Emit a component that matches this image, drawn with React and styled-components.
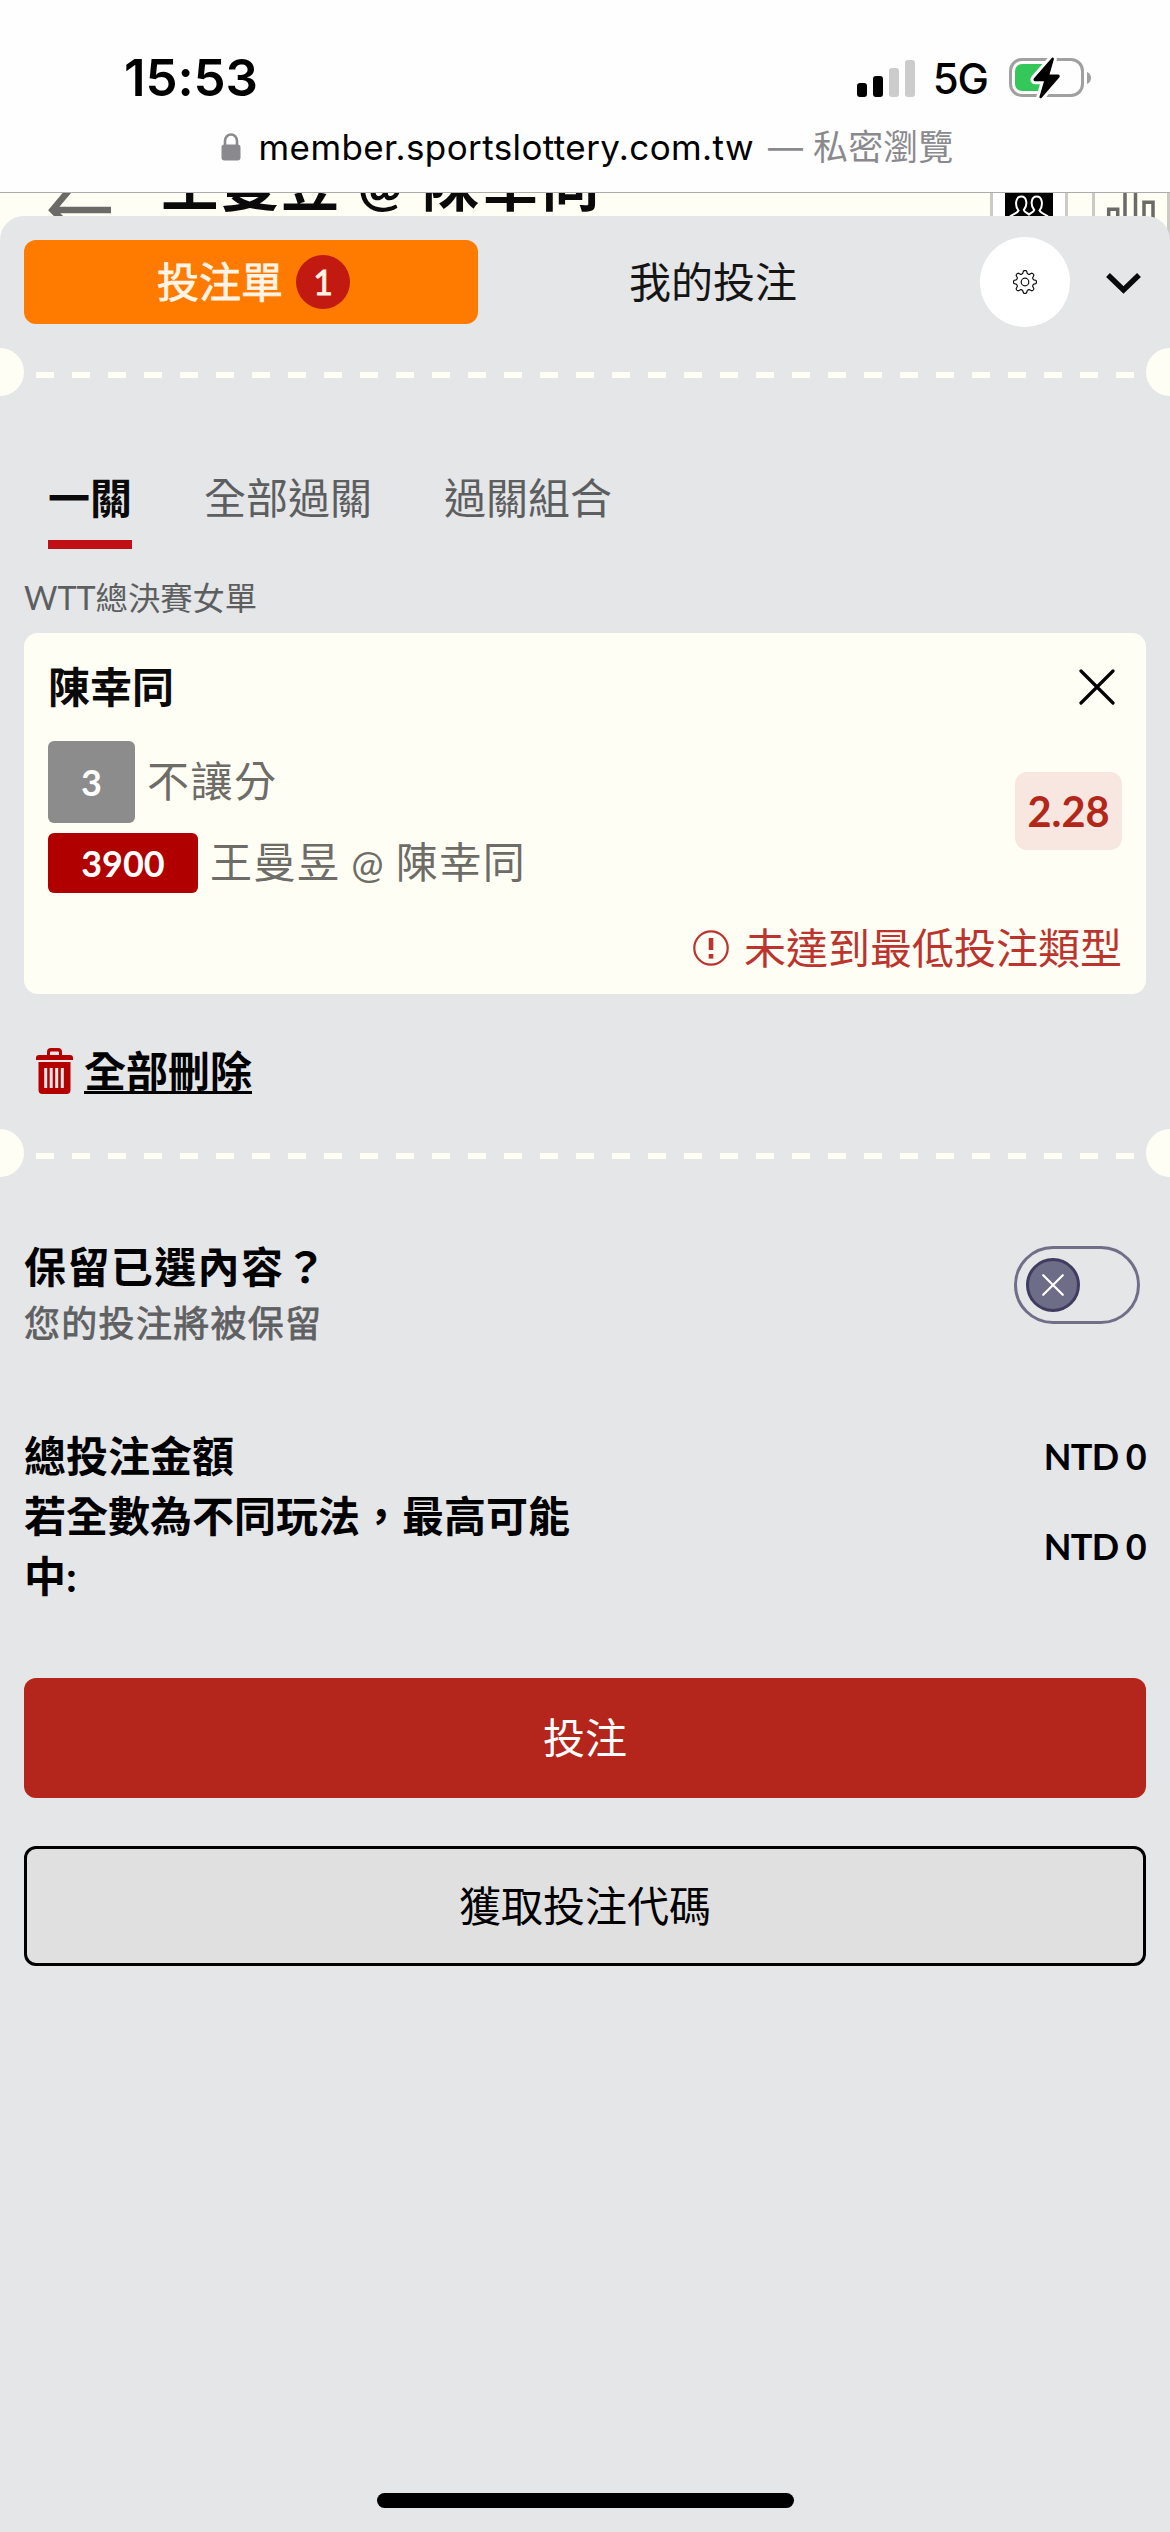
import React from 'react';
import styled, { createGlobalStyle } from 'styled-components';

const SANS = `Lato, "Noto Sans CJK TC", sans-serif`;
const SYSTEM = `Inter, "Noto Sans CJK TC", sans-serif`;
const CREAM = '#fffef5';
const SHEET = '#e4e6e8';

const GlobalStyle = createGlobalStyle`
  *, *::before, *::after { box-sizing: border-box; }
  body { margin: 0; background: ${SHEET}; font-family: ${SANS}; color: #000; }
  button { font: inherit; color: inherit; background: none; border: 0; padding: 0; margin: 0; }
  svg { display: block; flex: none; }
  h1, h2, p { margin: 0; font: inherit; }
`;

const Screen = styled.div`
  width: 1170px;
  height: 2532px;
  display: flex;
  flex-direction: column;
  overflow: hidden;
  background: ${CREAM};
`;

/* Browser chrome */
const Chrome = styled.header`
  flex: none;
  height: 193px;
  background: #fefefe;
  border-bottom: 1px solid #adadad;
  font-family: ${SYSTEM};
  display: flex;
  flex-direction: column;
`;
const StatusBar = styled.div`
  display: flex;
  justify-content: space-between;
  align-items: center;
  height: 60px;
  margin-top: 48px;
  padding: 0 79px 0 124px;
`;
const Clock = styled.span`
  font-size: 51px;
  font-weight: 600;
  letter-spacing: -0.1px;
  line-height: 60px;
`;
const StatusIcons = styled.div`
  display: flex;
  align-items: center;
`;
const Network = styled.span`
  font-size: 42px;
  font-weight: 500;
  line-height: 60px;
  letter-spacing: -1px;
  margin: 2px 21px 0 18px;
`;
const AddressBar = styled.div`
  display: flex;
  align-items: center;
  justify-content: center;
  height: 48px;
  margin-top: 15px;
  margin-bottom: auto;
  padding-left: 4px;
  font-size: 35px;
  line-height: 48px;
  white-space: pre;
`;
const Host = styled.span`
  margin-left: 18px;
  letter-spacing: 0.4px;
`;
const Mode = styled.span`
  color: #8a8a8e;
  margin-left: 14px;
  letter-spacing: 0.1px;
`;

/* Match page behind the sheet */
const PageHeader = styled.div`
  flex: none;
  height: 47px;
  overflow: hidden;
  display: flex;
  align-items: flex-start;
  padding-left: 48px;
`;
const PageTitle = styled.h1`
  flex: 1;
  margin: -29px 0 0 49px;
  font-size: 57.5px;
  font-weight: 700;
  line-height: 40px;
  letter-spacing: 2.6px;
  color: #0a0a0a;
  white-space: nowrap;
`;
const At = styled.span`
  font-size: 0.92em;
  line-height: 0;
`;
const HeaderCell = styled.div`
  width: 78px;
  height: 47px;
  border: solid #cbcac5;
  border-width: 0 3px;
  background: ${(p) => (p.$plain ? 'transparent' : '#fff')};
  margin-left: ${(p) => (p.$plain ? '24px' : '0')};
  display: flex;
  justify-content: center;
`;

/* Bet slip sheet */
const Sheet = styled.main`
  flex: 1;
  min-height: 0;
  margin-top: -24px;
  background: ${SHEET};
  border-radius: 24px 24px 0 0;
  display: flex;
  flex-direction: column;
`;
const SlipBar = styled.div`
  flex: none;
  height: 132px;
  display: flex;
  align-items: center;
  padding-left: 24px;
`;
const SlipTab = styled.button`
  display: flex;
  align-items: center;
  justify-content: center;
  gap: 13px;
  width: ${(p) => (p.$active ? '454px' : '470px')};
  height: 84px;
  padding-left: ${(p) => (p.$active ? '5px' : '0')};
  border-radius: 12px;
  font-size: 42px;
  line-height: 60px;
  background: ${(p) => (p.$active ? '#ff7b00' : 'transparent')};
  color: ${(p) => (p.$active ? '#fff4e6' : '#151515')};
  -webkit-text-stroke: ${(p) => (p.$active ? '0.8px' : '0')};
`;
const Count = styled.span`
  width: 54px;
  height: 54px;
  border-radius: 50%;
  background: #c21a11;
  font-size: 34px;
  line-height: 54px;
  text-align: center;
`;
const SettingsButton = styled.button`
  width: 90px;
  height: 90px;
  border-radius: 50%;
  background: #fff;
  margin-left: 32px;
  display: flex;
  align-items: center;
  justify-content: center;
`;
const CollapseButton = styled.button`
  margin: 4px 0 0 34px;
`;

const Perforation = styled.div`
  flex: none;
  height: 48px;
  display: flex;
  justify-content: space-between;
`;
const Notch = styled.i`
  width: 24px;
  height: 48px;
  background: ${CREAM};
  border-radius: ${(p) => (p.$right ? '24px 0 0 24px' : '0 24px 24px 0')};
`;
const Dashes = styled.i`
  flex: 1;
  height: 6px;
  margin: 24px 12px 0;
  background: repeating-linear-gradient(90deg, ${CREAM} 0 18px, transparent 18px 36px);
`;

const Modes = styled.nav`
  display: flex;
  gap: 72px;
  padding: 72px 48px 0;
`;
const ModeTab = styled.button`
  font-size: 42px;
  line-height: 60px;
  padding-bottom: 12px;
  border-bottom: 9px solid ${(p) => (p.$active ? '#c01015' : 'transparent')};
  font-weight: ${(p) => (p.$active ? 700 : 400)};
  color: ${(p) => (p.$active ? '#0a0a0a' : '#5d5e60')};
`;

const League = styled.p`
  margin: 29px 24px 15px;
  font-size: 32.3px;
  line-height: 40px;
  color: #5d5e60;
`;

const Card = styled.section`
  flex: none;
  height: 361px;
  margin: 0 24px;
  padding: 0 24px;
  border-radius: 14px;
  background: ${CREAM};
`;
const CardHead = styled.div`
  height: 108px;
  display: flex;
  align-items: center;
  justify-content: space-between;
  padding-right: 7px;
`;
const Player = styled.h2`
  font-size: 42px;
  font-weight: 700;
  line-height: 60px;
  color: #0a0a0a;
`;
const CardBody = styled.div`
  display: flex;
  align-items: center;
  justify-content: space-between;
`;
const Markets = styled.div`
  display: flex;
  flex-direction: column;
  gap: 10px;
`;
const Market = styled.div`
  display: flex;
  align-items: center;
  gap: 12px;
`;
const MarketName = styled.span`
  padding-bottom: 2px;
  font-size: 42px;
  line-height: 58px;
  letter-spacing: 1.5px;
  word-spacing: -1.5px;
  color: #6d6c67;
`;
const Code = styled.span`
  display: flex;
  align-items: center;
  justify-content: center;
  width: ${(p) => (p.$event ? '150px' : '87px')};
  height: ${(p) => (p.$event ? '60px' : '82px')};
  border-radius: 6px;
  background: ${(p) => (p.$event ? '#b00000' : '#8c8c8c')};
  color: #fff;
  font-size: 36px;
  font-weight: 700;
  line-height: 60px;
`;
const Odds = styled.span`
  width: 107px;
  height: 78px;
  margin-bottom: 12px;
  border-radius: 12px;
  background: #f8e6e0;
  color: #b3271b;
  font-size: 41.5px;
  font-weight: 700;
  line-height: 78px;
  text-align: center;
`;
const Warning = styled.div`
  display: flex;
  align-items: center;
  justify-content: flex-end;
  gap: 15px;
  margin-top: 25px;
  font-size: 42px;
  line-height: 60px;
  color: #bb352e;
`;

const DeleteAll = styled.button`
  display: flex;
  align-items: center;
  gap: 11px;
  height: 135px;
  padding: 19px 0 0 36px;
`;
const DeleteLabel = styled.span`
  font-size: 42px;
  font-weight: 700;
  line-height: 60px;
  text-decoration: underline;
  text-decoration-thickness: 3px;
  text-underline-offset: 4px;
  text-decoration-skip-ink: none;
`;

const KeepRow = styled.div`
  display: flex;
  justify-content: space-between;
  padding: 60px 30px 0 24px;
`;
const KeepTitle = styled.p`
  font-size: 42px;
  font-weight: 700;
  line-height: 60px;
  letter-spacing: 1.4px;
`;
const KeepNote = styled.p`
  font-size: 36px;
  line-height: 52px;
  letter-spacing: 1.3px;
  color: #5f6062;
  -webkit-text-stroke: 0.8px;
`;
const Toggle = styled.button`
  width: 126px;
  height: 78px;
  margin-top: 9px;
  padding: 9px;
  border: 3px solid #6f6f88;
  border-radius: 39px;
`;
const Knob = styled.span`
  width: 54px;
  height: 54px;
  border-radius: 50%;
  border: 3px solid #403c60;
  background: #6e6d88;
  display: flex;
  align-items: center;
  justify-content: center;
`;

const Totals = styled.div`
  margin-top: 77px;
  padding: 0 24px;
`;
const TotalRow = styled.div`
  display: flex;
  align-items: center;
  justify-content: space-between;
  font-weight: 700;
`;
const TotalLabel = styled.span`
  width: 562px;
  font-size: 42px;
  line-height: 60px;
`;
const Amount = styled.span`
  padding-bottom: 1px;
  font-size: 36px;
  line-height: 58px;
  letter-spacing: -0.7px;
  word-spacing: -0.6px;
`;

const Actions = styled.div`
  display: flex;
  flex-direction: column;
  gap: 48px;
  padding: 72px 24px 0;
`;
const Action = styled.button`
  height: 120px;
  border-radius: 12px;
  font-size: 42px;
  line-height: 60px;
  background: ${(p) => (p.$primary ? '#b4261b' : '#e0e0e0')};
  color: ${(p) => (p.$primary ? '#fff' : '#000')};
  border: ${(p) => (p.$primary ? '0' : '3px solid #000')};
`;

const HomeIndicator = styled.div`
  width: 417px;
  height: 15px;
  border-radius: 8px;
  background: #000;
  margin: auto auto 24px;
`;

const Signal = () => (
  <svg width="58" height="37" viewBox="0 0 58 37">
    <rect x="0" y="23" width="10" height="14" rx="3" />
    <rect x="16" y="16" width="10" height="21" rx="3" />
    <rect x="32" y="8" width="10" height="29" rx="3" fill="#ccc" />
    <rect x="48" y="0" width="10" height="37" rx="3" fill="#ccc" />
  </svg>
);

const Battery = () => (
  <svg width="82" height="42" viewBox="0 0 82 42">
    <rect x="1.5" y="2.5" width="72" height="36" rx="11.5" fill="none" stroke="#a0a0a0" strokeWidth="3" />
    <path d="M78 15c3 1 4 3.500 4 6s-1 5-4 6z" fill="#a0a0a0" />
    <path d="M13 7h25v27H13a7 7 0 0 1-7-7V14a7 7 0 0 1 7-7z" fill="#34c759" />
    <path
      d="M42.500 1.200 24.800 21.500c-.9 1.200 0 2.700 1.200 2.700h9L30.500 39.500c-.4 1.700 1.200 2.400 2.200 1.200l17.700-20.500c.9-1.200.1-2.700-1.200-2.700h-8.700l4.300-15c.4-1.800-1.300-2.500-2.300-1.300z"
      stroke="#fefefe"
      strokeWidth="6"
      paintOrder="stroke"
    />
  </svg>
);

const Lock = () => (
  <svg width="20" height="28" viewBox="0 0 20 28">
    <path d="M4 13V8a6 6.500 0 0 1 12 0v5" fill="none" stroke="#8a8a8e" strokeWidth="2.600" />
    <rect x="0.500" y="11.500" width="19" height="16" rx="3" fill="#8a8a8e" />
  </svg>
);

const BackArrow = () => (
  <svg width="64" height="47" viewBox="0 0 64 47" fill="none" stroke="#6b6a66" strokeWidth="6.500">
    <path d="M63 17H4M23-5 4.500 17l22 22" />
  </svg>
);

const People = () => (
  <svg width="48" height="47" viewBox="0 0 48 47">
    <rect width="48" height="47" />
    <path
      d="M4.500 24c2-3 7-2.500 9-6.500-4-5-3-14 2.800-14s6.500 9 2.500 13.500c.8 2.500 3.200 2.200 5.200 4.500 2-2.300 4.400-2 5.200-4.500-4-4.500-3.300-13.500 2.500-13.500s6.800 9 2.800 14c2 4 7 3.500 9 6.500"
      fill="none"
      stroke="#fff"
      strokeWidth="2"
    />
  </svg>
);

const Bars = () => (
  <svg width="50" height="47" viewBox="0 0 50 47" fill="none" stroke="#6b6a66" strokeWidth="3.500">
    <path d="M2.700 47V16.300h9V47M19 47V-6h10.500V47M38 47V9.300h9V47" />
  </svg>
);

const gearPath = (() => {
  const points = [];
  for (let i = 0; i < 96; i += 1) {
    const a = (i / 96) * Math.PI * 2;
    const wave = Math.cos(a * 8);
    const r = 10 + 1.5 * Math.tanh(wave * 2);
    points.push(`${(13 + r * Math.cos(a)).toFixed(2)} ${(13 + r * Math.sin(a)).toFixed(2)}`);
  }
  return `M${points.join('L')}Z`;
})();

const Gear = () => (
  <svg width="26" height="26" viewBox="0 0 26 26" fill="none" stroke="#111" strokeWidth="1.200">
    <path d={gearPath} />
    <circle cx="13" cy="13" r="3.800" />
  </svg>
);

const Chevron = () => (
  <svg width="38" height="24" viewBox="0 0 38 24" fill="none" stroke="#0a0a0a" strokeWidth="5.500">
    <path d="M4 3 19.500 18 35 3" />
  </svg>
);

const Cross = ({ size, color = '#000', width = 3 }) => (
  <svg width={size} height={size} viewBox="0 0 36 36" fill="none" stroke={color} strokeWidth={width} strokeLinecap="round">
    <path d="M2 2 34 34M34 2 2 34" />
  </svg>
);

const Alert = () => (
  <svg width="36" height="36" viewBox="0 0 36 36" fill="#bb352e">
    <circle cx="18" cy="18" r="16.700" fill="none" stroke="#bb352e" strokeWidth="2.200" />
    <rect x="15.700" y="8" width="4.600" height="12" />
    <rect x="15.700" y="24" width="4.600" height="4.600" />
  </svg>
);

const Trash = () => (
  <svg width="37" height="46" viewBox="0 0 37 46" fill="#b50000">
    <path d="M11 7V4a4 4 0 0 1 4-4h7a4 4 0 0 1 4 4v3h8a3 3 0 0 1 3 3v2H0v-2a3 3 0 0 1 3-3zM14 7h9V4.500a1 1 0 0 0-1-1h-7a1 1 0 0 0-1 1z" fillRule="evenodd" />
    <path d="M2.500 14h32v28a4 4 0 0 1-4 4h-24a4 4 0 0 1-4-4zM8.200 20v20h3V20zM13.700 20v20h3V20zM19.200 20v20h3V20zM24.800 20v20h3V20z" fillRule="evenodd" />
  </svg>
);

const Divider = () => (
  <Perforation>
    <Notch />
    <Dashes />
    <Notch $right />
  </Perforation>
);

export default function App() {
  return (
    <Screen lang="zh-Hant-TW">
      <GlobalStyle />
      <Chrome>
        <StatusBar>
          <Clock>15:53</Clock>
          <StatusIcons>
            <Signal />
            <Network>5G</Network>
            <Battery />
          </StatusIcons>
        </StatusBar>
        <AddressBar>
          <Lock />
          <Host>member.sportslottery.com.tw</Host>
          <Mode>— 私密瀏覽</Mode>
        </AddressBar>
      </Chrome>

      <PageHeader>
        <BackArrow />
        <PageTitle>
          王曼昱 <At>@</At> 陳幸同
        </PageTitle>
        <HeaderCell>
          <People />
        </HeaderCell>
        <HeaderCell $plain>
          <Bars />
        </HeaderCell>
      </PageHeader>

      <Sheet>
        <SlipBar>
          <SlipTab $active>
            投注單
            <Count>1</Count>
          </SlipTab>
          <SlipTab>我的投注</SlipTab>
          <SettingsButton aria-label="設定">
            <Gear />
          </SettingsButton>
          <CollapseButton aria-label="收合">
            <Chevron />
          </CollapseButton>
        </SlipBar>

        <Divider />

        <Modes>
          <ModeTab $active>一關</ModeTab>
          <ModeTab>全部過關</ModeTab>
          <ModeTab>過關組合</ModeTab>
        </Modes>

        <League>WTT總決賽女單</League>

        <Card>
          <CardHead>
            <Player>陳幸同</Player>
            <Cross size={36} width={3.2} />
          </CardHead>
          <CardBody>
            <Markets>
              <Market>
                <Code>3</Code>
                <MarketName>不讓分</MarketName>
              </Market>
              <Market>
                <Code $event>3900</Code>
                <MarketName>
                  王曼昱 <At>@</At> 陳幸同
                </MarketName>
              </Market>
            </Markets>
            <Odds>2.28</Odds>
          </CardBody>
          <Warning>
            <Alert />
            未達到最低投注類型
          </Warning>
        </Card>

        <DeleteAll>
          <Trash />
          <DeleteLabel>全部刪除</DeleteLabel>
        </DeleteAll>

        <Divider />

        <KeepRow>
          <div>
            <KeepTitle>保留已選內容？</KeepTitle>
            <KeepNote>您的投注將被保留</KeepNote>
          </div>
          <Toggle role="switch" aria-checked="false">
            <Knob>
              <Cross size={22} color="#fff" width={3.6} />
            </Knob>
          </Toggle>
        </KeepRow>

        <Totals>
          <TotalRow>
            <TotalLabel>總投注金額</TotalLabel>
            <Amount>NTD 0</Amount>
          </TotalRow>
          <TotalRow>
            <TotalLabel>若全數為不同玩法，最高可能中:</TotalLabel>
            <Amount>NTD 0</Amount>
          </TotalRow>
        </Totals>

        <Actions>
          <Action $primary>投注</Action>
          <Action>獲取投注代碼</Action>
        </Actions>

        <HomeIndicator />
      </Sheet>
    </Screen>
  );
}
